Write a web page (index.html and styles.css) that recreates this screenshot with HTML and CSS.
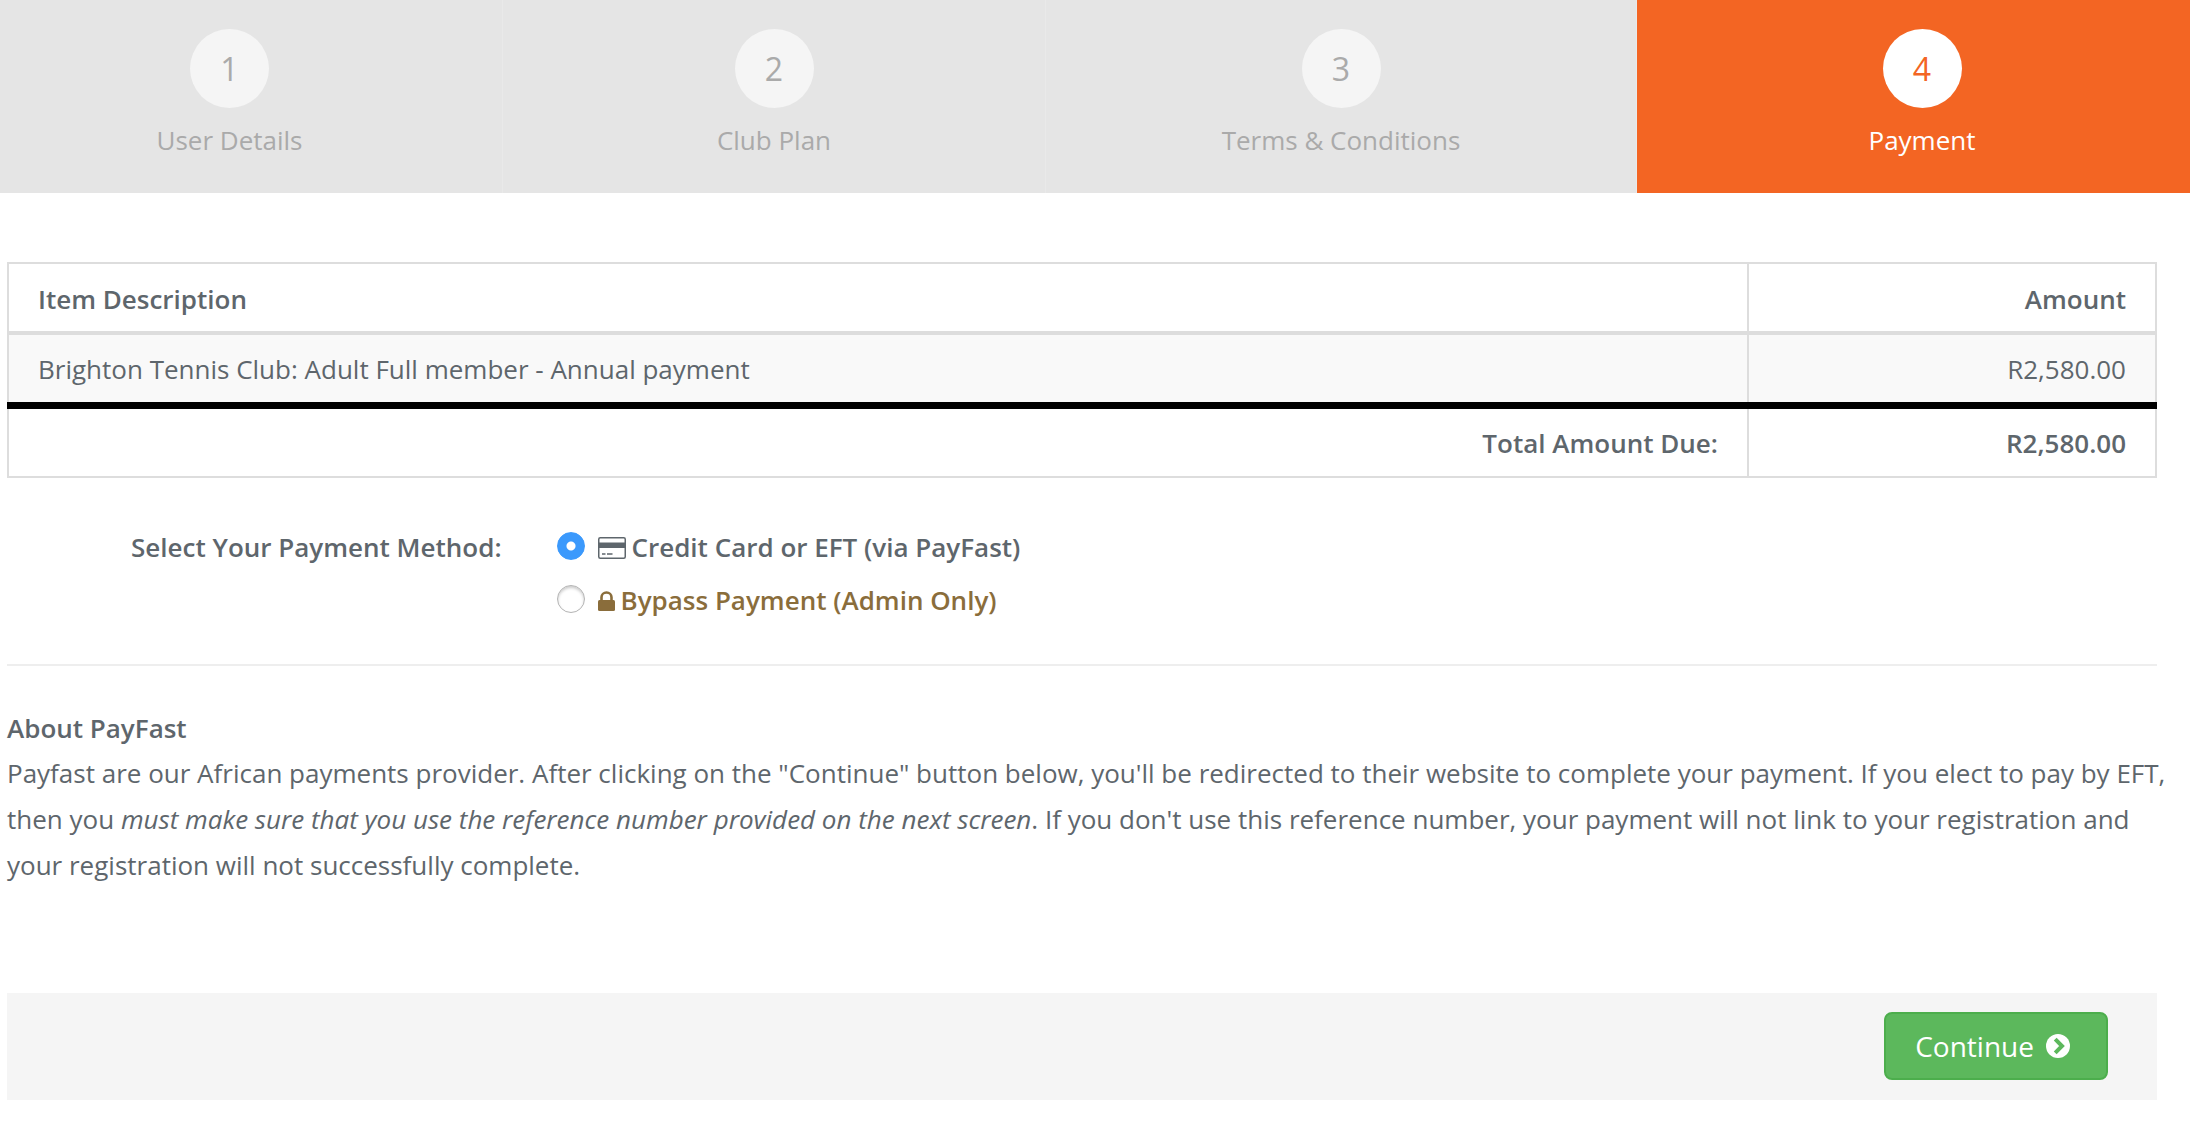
FILE: index.html
```html
<!DOCTYPE html>
<html lang="en">
<head>
<meta charset="utf-8">
<meta name="viewport" content="width=device-width, initial-scale=1">
<title>Payment</title>
<link rel="stylesheet" href="styles.css">
</head>
<body>
<main class="page">
  <ol class="steps">
    <li class="step"><span class="step-number">1</span><span class="step-label">User Details</span></li>
    <li class="step"><span class="step-number">2</span><span class="step-label">Club Plan</span></li>
    <li class="step"><span class="step-number">3</span><span class="step-label">Terms &amp; Conditions</span></li>
    <li class="step step-active" aria-current="step"><span class="step-number">4</span><span class="step-label">Payment</span></li>
  </ol>

  <table class="items">
    <thead>
      <tr><th scope="col">Item Description</th><th scope="col" class="amount">Amount</th></tr>
    </thead>
    <tbody>
      <tr><td>Brighton Tennis Club: Adult Full member - Annual payment</td><td class="amount">R2,580.00</td></tr>
    </tbody>
    <tfoot>
      <tr><th scope="row">Total Amount Due:</th><td class="amount">R2,580.00</td></tr>
    </tfoot>
  </table>

  <form class="payment">
    <div class="method" role="radiogroup" aria-labelledby="method-title">
      <div class="method-title" id="method-title">Select Your Payment Method:</div>
      <div class="options">
        <div class="option">
          <input class="radio" type="radio" name="method" id="payfast" checked>
          <label class="option-label" for="payfast">
            <svg class="icon-card" viewBox="0 0 28 22" aria-hidden="true">
              <rect x="0.75" y="0.75" width="26.5" height="20.5" rx="1.5" fill="none" stroke="currentColor" stroke-width="1.5"/>
              <path d="M0 5.5h28v5.500H0z" fill="currentColor"/>
              <path d="M4 17h3.500M9 17h5.500" stroke="currentColor" stroke-width="1.5"/>
            </svg>
            <span>Credit Card or EFT (via PayFast)</span>
          </label>
        </div>
        <div class="option">
          <input class="radio" type="radio" name="method" id="bypass">
          <label class="option-label option-admin" for="bypass">
            <svg class="icon-lock" viewBox="0 0 17 20" aria-hidden="true">
              <path d="M3.500 10V6.200a5 4.700 0 0 1 10 0V10" fill="none" stroke="currentColor" stroke-width="2.600"/>
              <rect y="9" width="17" height="11" rx="1.500" fill="currentColor"/>
            </svg>
            <span>Bypass Payment (Admin Only)</span>
          </label>
        </div>
      </div>
    </div>

    <hr class="divider">

    <section class="about">
      <h2 class="about-title">About PayFast</h2>
      <p class="about-text">Payfast are our African payments provider. After clicking on the "Continue" button below, you'll be redirected to their website to complete your payment. If you elect to pay by EFT, then you <em>must make sure that you use the reference number provided on the next screen</em>. If you don't use this reference number, your payment will not link to your registration and your registration will not successfully complete.</p>
    </section>

    <div class="actions">
      <button class="continue" type="button">
        <span>Continue</span>
        <svg class="icon-next" viewBox="0 0 24 24" aria-hidden="true">
          <circle cx="12" cy="12" r="12" fill="#fff"/>
          <path d="M9.200 5.200L16 12l-6.800 6.800" fill="none" stroke="#5cb85c" stroke-width="4"/>
        </svg>
      </button>
    </div>
  </form>
</main>
</body>
</html>
```
FILE: styles.css
```css
* {
  box-sizing: border-box;
}

body {
  margin: 0;
  background: #fff;
  color: #5e666c;
  font-family: "Open Sans", "Noto Sans", sans-serif;
  font-size: 26px;
  line-height: 37px;
}

.page {
  padding: 0 33px 44px 7px;
  overflow-x: hidden;
}

/* Wizard steps */
.steps {
  display: grid;
  grid-template-columns: 546fr 543fr 591fr 570fr;
  margin: 0 -50px 69px;
  padding: 0;
  list-style: none;
}

.step {
  display: flex;
  flex-direction: column;
  align-items: center;
  gap: 13px;
  padding: 29px 0 34px;
  background: #e5e5e5;
  border-right: 1px solid #e9e9e9;
  color: #aaa;
}

.step-number {
  width: 79px;
  height: 79px;
  border-radius: 50%;
  background: #f5f5f5;
  font-size: 32px;
  line-height: 80px;
  text-align: center;
}

.step-label {
  line-height: 38px;
}

.step-active {
  background: #f36523;
  border-right: 0;
  color: #fff;
}

.step-active .step-number {
  background: #fff;
  color: #f36523;
}

/* Items table */
.items {
  width: 100%;
  border-collapse: collapse;
}

.items th,
.items td {
  padding: 16px 29px 14px;
  border: 2px solid #ddd;
  text-align: left;
  font-weight: 400;
}

.items thead th {
  padding: 17px 29px 13px;
  border-bottom: 4px solid #ddd;
  font-weight: 600;
}

.items tbody td {
  background: #f9f9f9;
}

.items tfoot th,
.items tfoot td {
  border-top: 7px solid #000;
  text-align: right;
  font-weight: 600;
}

.items .amount {
  width: 19%;
  text-align: right;
}

/* Payment method */
.method {
  display: grid;
  grid-template-columns: 23% 1fr;
  column-gap: 55px;
  margin-top: 50px;
  font-weight: 600;
}

.method-title {
  padding-top: 1px;
  text-align: right;
}

.options {
  display: flex;
  flex-direction: column;
  gap: 15px;
}

.option {
  display: flex;
  align-items: flex-start;
  gap: 13px;
}

.radio {
  appearance: none;
  width: 28px;
  height: 28px;
  margin: 4px 0 0;
  border: 1px solid #b4b4b4;
  border-radius: 50%;
  background: #fff;
  box-shadow: inset 0 2px 3px #ccc;
}

.radio:checked {
  border-color: #3b99fc;
  background: radial-gradient(circle, #fff 4px, #3b99fc 5px);
  box-shadow: none;
}

.option-label {
  display: flex;
  align-items: center;
  gap: 6px;
  padding-top: 1px;
}

.option-admin {
  color: #8a6d3b;
}

.icon-card {
  width: 28px;
  height: 22px;
}

.icon-lock {
  width: 17px;
  height: 20px;
}

.divider {
  height: 2px;
  margin: 45px 0 40px;
  border: 0;
  background: #eee;
}

/* PayFast notes */
.about-title,
.about-text {
  margin: 0;
  font-size: 26px;
  line-height: 44px;
}

.about-title {
  font-weight: 600;
}

.about-text {
  margin-right: -16px;
  line-height: 46px;
}

/* Footer */
.actions {
  display: flex;
  justify-content: flex-end;
  margin-top: 105px;
  padding: 19px 49px 20px;
  background: #f5f5f5;
}

.continue {
  display: flex;
  align-items: center;
  gap: 12px;
  padding: 12px 36px 12px 29px;
  border: 2px solid #4cae4c;
  border-radius: 8px;
  background: #5cb85c;
  color: #fff;
  font-family: inherit;
  font-size: 28px;
  line-height: 40px;
}

.icon-next {
  width: 24px;
  height: 24px;
}
```
